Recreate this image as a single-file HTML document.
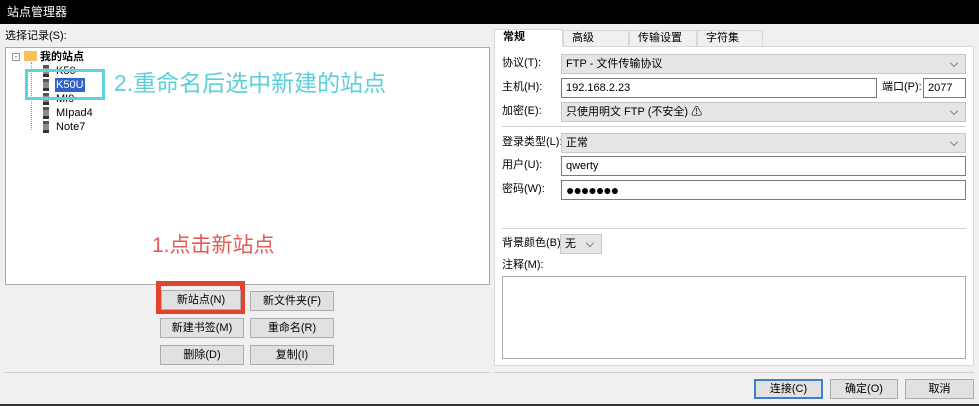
<!DOCTYPE html>
<html><head><meta charset="utf-8"><style>
*{margin:0;padding:0;box-sizing:border-box}
body{width:979px;height:406px;background:#f0f0f0;font-family:"Liberation Sans","Noto Sans CJK SC",sans-serif;font-size:11px;color:#000;position:relative;overflow:hidden}
.a{position:absolute}
.btn{position:absolute;background:#e1e1e1;border:1px solid #adadad;text-align:center;line-height:18px;height:20px;font-size:11px}
.inp{position:absolute;background:#fff;border:1px solid #7a7a7a;padding-left:4px;line-height:18px;height:20px}
.sel{position:absolute;background:#e5e5e5;border:1px solid #c8c8c8;padding-left:4px;line-height:18px;height:20px}
.sel:after{content:"";position:absolute;right:8px;top:5px;width:5px;height:5px;border-right:1px solid #888;border-bottom:1px solid #888;transform:rotate(45deg)}
.lbl{position:absolute;font-size:11px;line-height:14px}
.tab{position:absolute;top:30px;height:16px;border:1px solid #d9d9d9;border-bottom:none;padding-left:8px;line-height:15px;background:#f0f0f0}
.hl{position:absolute;height:1px;background:#d0d0d0}
.node{position:absolute;left:43px;width:6px;height:12px;background:linear-gradient(#555 0 3px,#8a8a8a 3px 9px,#333 9px)}
</style></head><body>
<div class="a" style="left:0;top:0;width:979px;height:24px;background:#000;color:#fff;font-size:12px;line-height:24px;padding-left:7px">站点管理器</div>
<div class="lbl" style="left:5px;top:29px">选择记录(S):</div>
<div class="a" style="left:5px;top:47px;width:485px;height:238px;background:#fff;border:1px solid #aaa"></div>
<div class="a" style="left:12px;top:53px;width:8px;height:8px;border:1px solid #999;font-size:8px;line-height:6px;text-align:center;color:#555">-</div>
<div class="a" style="left:24px;top:51px;width:13px;height:10px;background:#f3c35a"></div>
<div class="lbl" style="left:40px;top:50px;font-weight:bold">我的站点</div>
<div class="a" style="left:31px;top:62px;width:0;height:68px;border-left:1px dotted #999"></div>
<div class="node" style="top:65px"></div><div class="lbl" style="left:56px;top:64px">K50</div>
<div class="node" style="top:79px"></div><div class="lbl" style="left:55px;top:78px;background:#3063c7;color:#fff;padding:0 1px">K50U</div>
<div class="node" style="top:93px"></div><div class="lbl" style="left:56px;top:92px">MI9</div>
<div class="node" style="top:107px"></div><div class="lbl" style="left:56px;top:106px">MIpad4</div>
<div class="node" style="top:121px"></div><div class="lbl" style="left:56px;top:120px">Note7</div>
<div class="a" style="left:25px;top:69px;width:80px;height:31px;border:3px solid #5fd3dd"></div>
<div class="a" style="left:114px;top:68px;font-size:23px;color:#5cd0da;line-height:30px">2.重命名后选中新建的站点</div>
<div class="a" style="left:152px;top:232px;font-size:21px;color:#e45a56;line-height:28px">1.点击新站点</div>
<div class="a" style="left:156px;top:281px;width:89px;height:33px;border:5px solid #e0442c"></div>
<div class="btn" style="left:161px;top:290px;width:80px">新站点(N)</div>
<div class="btn" style="left:250px;top:291px;width:84px">新文件夹(F)</div>
<div class="btn" style="left:160px;top:318px;width:84px">新建书签(M)</div>
<div class="btn" style="left:250px;top:318px;width:84px">重命名(R)</div>
<div class="btn" style="left:160px;top:345px;width:84px">删除(D)</div>
<div class="btn" style="left:250px;top:345px;width:84px">复制(I)</div>
<div class="hl" style="left:5px;top:372px;width:485px"></div>
<div class="a" style="left:494px;top:46px;width:480px;height:320px;background:#fff;border:1px solid #d9d9d9"></div>
<div class="tab" style="left:494px;top:29px;width:69px;height:18px;background:#fff;font-weight:bold">常规</div>
<div class="tab" style="left:563px;width:66px">高级</div>
<div class="tab" style="left:629px;width:68px">传输设置</div>
<div class="tab" style="left:697px;width:66px">字符集</div>
<div class="lbl" style="left:502px;top:56px">协议(T):</div>
<div class="sel" style="left:561px;top:54px;width:405px">FTP - 文件传输协议</div>
<div class="lbl" style="left:502px;top:80px">主机(H):</div>
<div class="inp" style="left:561px;top:78px;width:316px">192.168.2.23</div>
<div class="lbl" style="left:882px;top:80px">端口(P):</div>
<div class="inp" style="left:923px;top:78px;width:43px">2077</div>
<div class="lbl" style="left:502px;top:104px">加密(E):</div>
<div class="sel" style="left:561px;top:102px;width:405px">只使用明文 FTP (不安全) ⚠</div>
<div class="hl" style="left:502px;top:126px;width:464px"></div>
<div class="lbl" style="left:502px;top:135px">登录类型(L):</div>
<div class="sel" style="left:561px;top:133px;width:405px">正常</div>
<div class="lbl" style="left:502px;top:158px">用户(U):</div>
<div class="inp" style="left:561px;top:156px;width:405px">qwerty</div>
<div class="lbl" style="left:502px;top:182px">密码(W):</div>
<div class="inp" style="left:561px;top:180px;width:405px;font-size:14px;letter-spacing:-1px">●●●●●●●</div>
<div class="hl" style="left:502px;top:228px;width:464px"></div>
<div class="lbl" style="left:502px;top:236px">背景颜色(B)</div>
<div class="sel" style="left:560px;top:234px;width:42px">无</div>
<div class="lbl" style="left:502px;top:258px">注释(M):</div>
<div class="a" style="left:502px;top:276px;width:464px;height:83px;background:#fff;border:1px solid #aaa"></div>
<div class="hl" style="left:494px;top:372px;width:480px"></div>
<div class="btn" style="left:754px;top:379px;width:69px;border:2px solid #3c7fd1;line-height:16px">连接(C)</div>
<div class="btn" style="left:830px;top:379px;width:68px">确定(O)</div>
<div class="btn" style="left:905px;top:379px;width:69px">取消</div>
<div class="a" style="left:0;top:404px;width:979px;height:2px;background:#333"></div>
</body></html>
